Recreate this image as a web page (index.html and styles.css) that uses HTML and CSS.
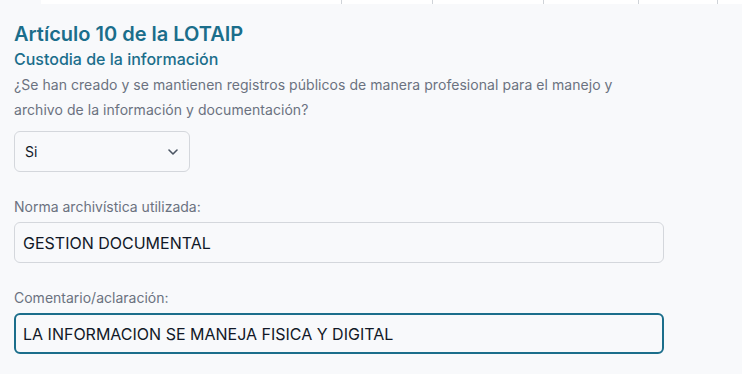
FILE: index.html
```html
<!DOCTYPE html>
<html lang="es">
<head>
  <meta charset="UTF-8" />
  <meta name="viewport" content="width=device-width, initial-scale=1.0" />
  <title>Artículo 10 de la LOTAIP</title>
  <link rel="stylesheet" href="styles.css">
</head>
<body>
  <div class="table-edge">
    <div class="cell cell-wide"></div>
    <div class="cell" style="width: 91px"></div>
    <div class="cell" style="width: 111px"></div>
    <div class="cell" style="width: 95px"></div>
    <div class="cell" style="width: 79px"></div>
    <div class="cell cell-rest"></div>
  </div>

  <div class="container">
    <h2>Artículo 10 de la LOTAIP</h2>
    <h3>Custodia de la información</h3>
    <p class="question">¿Se han creado y se mantienen registros públicos de manera profesional para el manejo y<br>archivo de la información y documentación?</p>

    <div class="select-wrap">
      <select id="registros" name="registros">
        <option value="si">Si</option>
        <option value="no">No</option>
      </select>
      <svg class="chevron" width="10" height="6" viewBox="0 0 10 6">
        <path d="M1 1 L5 5 L9 1" fill="none" stroke="#4b5563" stroke-width="1.6" stroke-linecap="round" stroke-linejoin="round"/>
      </svg>
    </div>

    <label for="norma">Norma archivística utilizada:</label>
    <input type="text" id="norma" name="norma" value="GESTION DOCUMENTAL" />

    <label for="comentario">Comentario/aclaración:</label>
    <input type="text" id="comentario" name="comentario" class="is-active" value="LA INFORMACION SE MANEJA FISICA Y DIGITAL" />
  </div>
</body>
</html>
```

FILE: styles.css
```css
body {
  font-family: 'Inter', 'Liberation Sans', sans-serif;
  margin: 0;
  background-color: #f8f9fb;
  color: #111827;
}
.table-edge {
  display: flex;
  height: 4px;
  margin-left: 41px;
  background: #ffffff;
}
.cell {
  border-left: 1px solid #cfd3d8;
  box-sizing: border-box;
}
.cell-wide {
  width: 300px;
  border-left: none;
}
.cell-rest {
  flex: 1;
}
.container {
  width: 650px;
  padding: 18px 14px 0;
}
h2 {
  margin: 0;
  font-size: 20px;
  line-height: 24px;
  font-weight: 600;
  color: #1b6e8b;
}
h3 {
  margin: 3px 0 0;
  font-size: 16px;
  line-height: 20px;
  font-weight: 500;
  color: #1b6e8b;
}
.question {
  margin: 3px 0 0;
  font-size: 14px;
  line-height: 25px;
  letter-spacing: 0.05px;
  color: #6b7280;
}
.select-wrap {
  position: relative;
  width: 176px;
  margin-top: 9px;
}
select {
  appearance: none;
  -webkit-appearance: none;
  width: 100%;
  height: 41px;
  padding: 0 30px 0 10px;
  border: 1px solid #d4d7dc;
  border-radius: 6px;
  background: #f8f9fb;
  font-family: inherit;
  font-size: 14px;
  color: #111827;
  box-sizing: border-box;
}
.chevron {
  position: absolute;
  right: 12px;
  top: 18px;
  pointer-events: none;
}
label {
  display: block;
  margin-top: 27px;
  margin-bottom: 7px;
  font-size: 14px;
  line-height: 16px;
  color: #6b7280;
}
input[type="text"] {
  display: block;
  width: 100%;
  height: 41px;
  padding: 0 8px;
  border: 1px solid #d4d7dc;
  border-radius: 6px;
  background: #f8f9fb;
  font-family: inherit;
  font-size: 16px;
  color: #111827;
  box-sizing: border-box;
  outline: none;
}
input[type="text"].is-active {
  border: 2px solid #1b6e8b;
  padding: 0 7px;
}
```
